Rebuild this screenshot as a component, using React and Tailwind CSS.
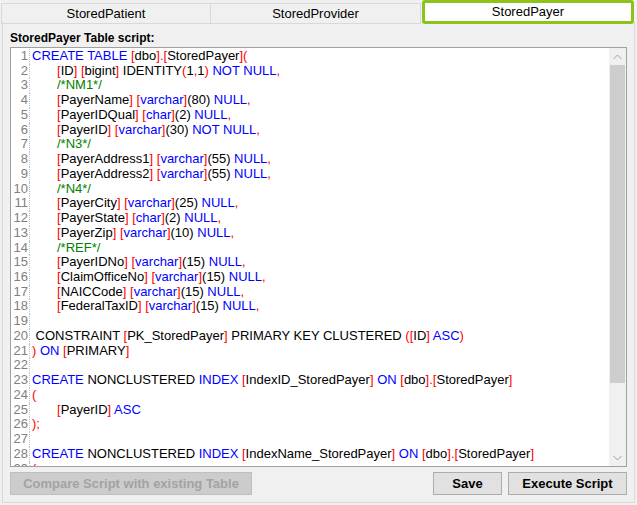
const R = "text-[#ff0000]";
const B = "text-[#0000ff]";
const G = "text-[#008000]";
const K = "text-black";

const t = (s, c = K) => [c, s];
const br = (name, c = K) => [t("[", R), t(name, c), t("]", R)];

const lines = [
  [0, [t("CREATE TABLE ", B), ...br("dbo"), t(".", R), ...br("StoredPayer"), t("(", R)]],
  [1, [...br("ID"), t(" "), ...br("bigint"), t(" IDENTITY"), t("(", R), t("1"), t(",", R), t("1"), t(")", R), t(" NOT NULL", B), t(",", R)]],
  [1, [t("/*NM1*/", G)]],
  [1, [...br("PayerName"), t(" "), ...br("varchar", B), t("(80) "), t("NULL", B), t(",", R)]],
  [1, [...br("PayerIDQual"), t(" "), ...br("char", B), t("(2) "), t("NULL", B), t(",", R)]],
  [1, [...br("PayerID"), t(" "), ...br("varchar", B), t("(30) "), t("NOT NULL", B), t(",", R)]],
  [1, [t("/*N3*/", G)]],
  [1, [...br("PayerAddress1"), t(" "), ...br("varchar", B), t("(55) "), t("NULL", B), t(",", R)]],
  [1, [...br("PayerAddress2"), t(" "), ...br("varchar", B), t("(55) "), t("NULL", B), t(",", R)]],
  [1, [t("/*N4*/", G)]],
  [1, [...br("PayerCity"), t(" "), ...br("varchar", B), t("(25) "), t("NULL", B), t(",", R)]],
  [1, [...br("PayerState"), t(" "), ...br("char", B), t("(2) "), t("NULL", B), t(",", R)]],
  [1, [...br("PayerZip"), t(" "), ...br("varchar", B), t("(10) "), t("NULL", B), t(",", R)]],
  [1, [t("/*REF*/", G)]],
  [1, [...br("PayerIDNo"), t(" "), ...br("varchar", B), t("(15) "), t("NULL", B), t(",", R)]],
  [1, [...br("ClaimOfficeNo"), t(" "), ...br("varchar", B), t("(15) "), t("NULL", B), t(",", R)]],
  [1, [...br("NAICCode"), t(" "), ...br("varchar", B), t("(15) "), t("NULL", B), t(",", R)]],
  [1, [...br("FederalTaxID"), t(" "), ...br("varchar", B), t("(15) "), t("NULL", B), t(",", R)]],
  [0, []],
  [0, [t(" CONSTRAINT "), ...br("PK_StoredPayer"), t(" PRIMARY KEY CLUSTERED "), t("(", R), ...br("ID"), t(" ASC", B), t(")", R)]],
  [0, [t(")", R), t(" ON ", B), ...br("PRIMARY")]],
  [0, []],
  [0, [t("CREATE ", B), t("NONCLUSTERED "), t("INDEX ", B), ...br("IndexID_StoredPayer"), t(" ON ", B), ...br("dbo"), t(".", R), ...br("StoredPayer")]],
  [0, [t("(", R)]],
  [1, [...br("PayerID"), t(" ASC", B)]],
  [0, [t(");", R)]],
  [0, []],
  [0, [t("CREATE ", B), t("NONCLUSTERED "), t("INDEX ", B), ...br("IndexName_StoredPayer"), t(" ON ", B), ...br("dbo"), t(".", R), ...br("StoredPayer")]],
  [0, [t("(", R)]],
];

export default function App() {
  return (
    <div className="w-[637px] h-[505px] bg-[#f0f0f0] relative overflow-hidden" style={{ fontFamily: "'Liberation Sans', Arial, sans-serif" }}>
      <div className="flex h-[24px] items-end pl-[1px]">
        <div className="w-[210px] h-[21px] border border-[#d9d9d9] bg-[#f0f0f0] text-[13px] text-center leading-[20px]">StoredPatient</div>
        <div className="w-[210px] h-[21px] border border-l-0 border-[#d9d9d9] bg-[#f0f0f0] text-[13px] text-center leading-[20px]">StoredProvider</div>
        <div className="w-[212px] h-[24px] border-[3px] border-[#8dc31a] rounded-[3px] bg-white text-[13px] text-center leading-[17px] ml-[1px]">StoredPayer</div>
      </div>
      <div className="absolute left-[2px] top-[22px] w-[633px] h-[481px] border border-[#d9d9d9] border-t-0" />
      <div className="relative px-[10px] pt-[6px]">
        <div className="text-[12px] font-bold leading-[16px] h-[17px]">StoredPayer Table script:</div>
        <div className="flex h-[420px] border border-[#a0a0a0] bg-white">
          <div className="flex-1 overflow-hidden pt-[1px]">
            {lines.map(([ind, segs], i) => (
              <div key={i} className="flex h-[14.74px] leading-[14.74px] text-[13px] whitespace-pre">
                <div className="w-[19px] text-right pr-[1px] text-[#808080] border-r border-dotted border-[#c0c0c0] shrink-0">{i + 1}</div>
                <div className={ind ? "pl-[27px]" : "pl-[2px]"}>
                  {segs.map(([c, s], j) => (
                    <span key={j} className={c}>{s}</span>
                  ))}
                </div>
              </div>
            ))}
          </div>
          <div className="w-[17px] bg-[#f0f0f0] flex flex-col">
            <div className="h-[17px] flex items-center justify-center text-[#a0a0a0]">
              <svg width="9" height="6" viewBox="0 0 9 6"><path d="M0.5 5L4.5 1L8.5 5" fill="none" stroke="currentColor" /></svg>
            </div>
            <div className="mx-[1px] h-[318px] bg-[#cdcdcd]" />
            <div className="flex-1" />
            <div className="h-[17px] flex items-center justify-center text-[#a0a0a0]">
              <svg width="9" height="6" viewBox="0 0 9 6"><path d="M0.5 1L4.5 5L8.5 1" fill="none" stroke="currentColor" /></svg>
            </div>
          </div>
        </div>
        <div className="flex items-center mt-[5px] gap-[6px]">
          <div className="w-[242px] h-[23px] border border-[#bfbfbf] bg-[#cccccc] text-[#a3a3a3] text-[13px] font-bold flex items-center justify-center">Compare Script with existing Table</div>
          <div className="flex-1" />
          <div className="w-[69px] h-[23px] border border-[#adadad] bg-[#e1e1e1] text-[13px] font-bold flex items-center justify-center">Save</div>
          <div className="w-[119px] h-[23px] border border-[#adadad] bg-[#e1e1e1] text-[13px] font-bold flex items-center justify-center">Execute Script</div>
        </div>
      </div>
    </div>
  );
}
